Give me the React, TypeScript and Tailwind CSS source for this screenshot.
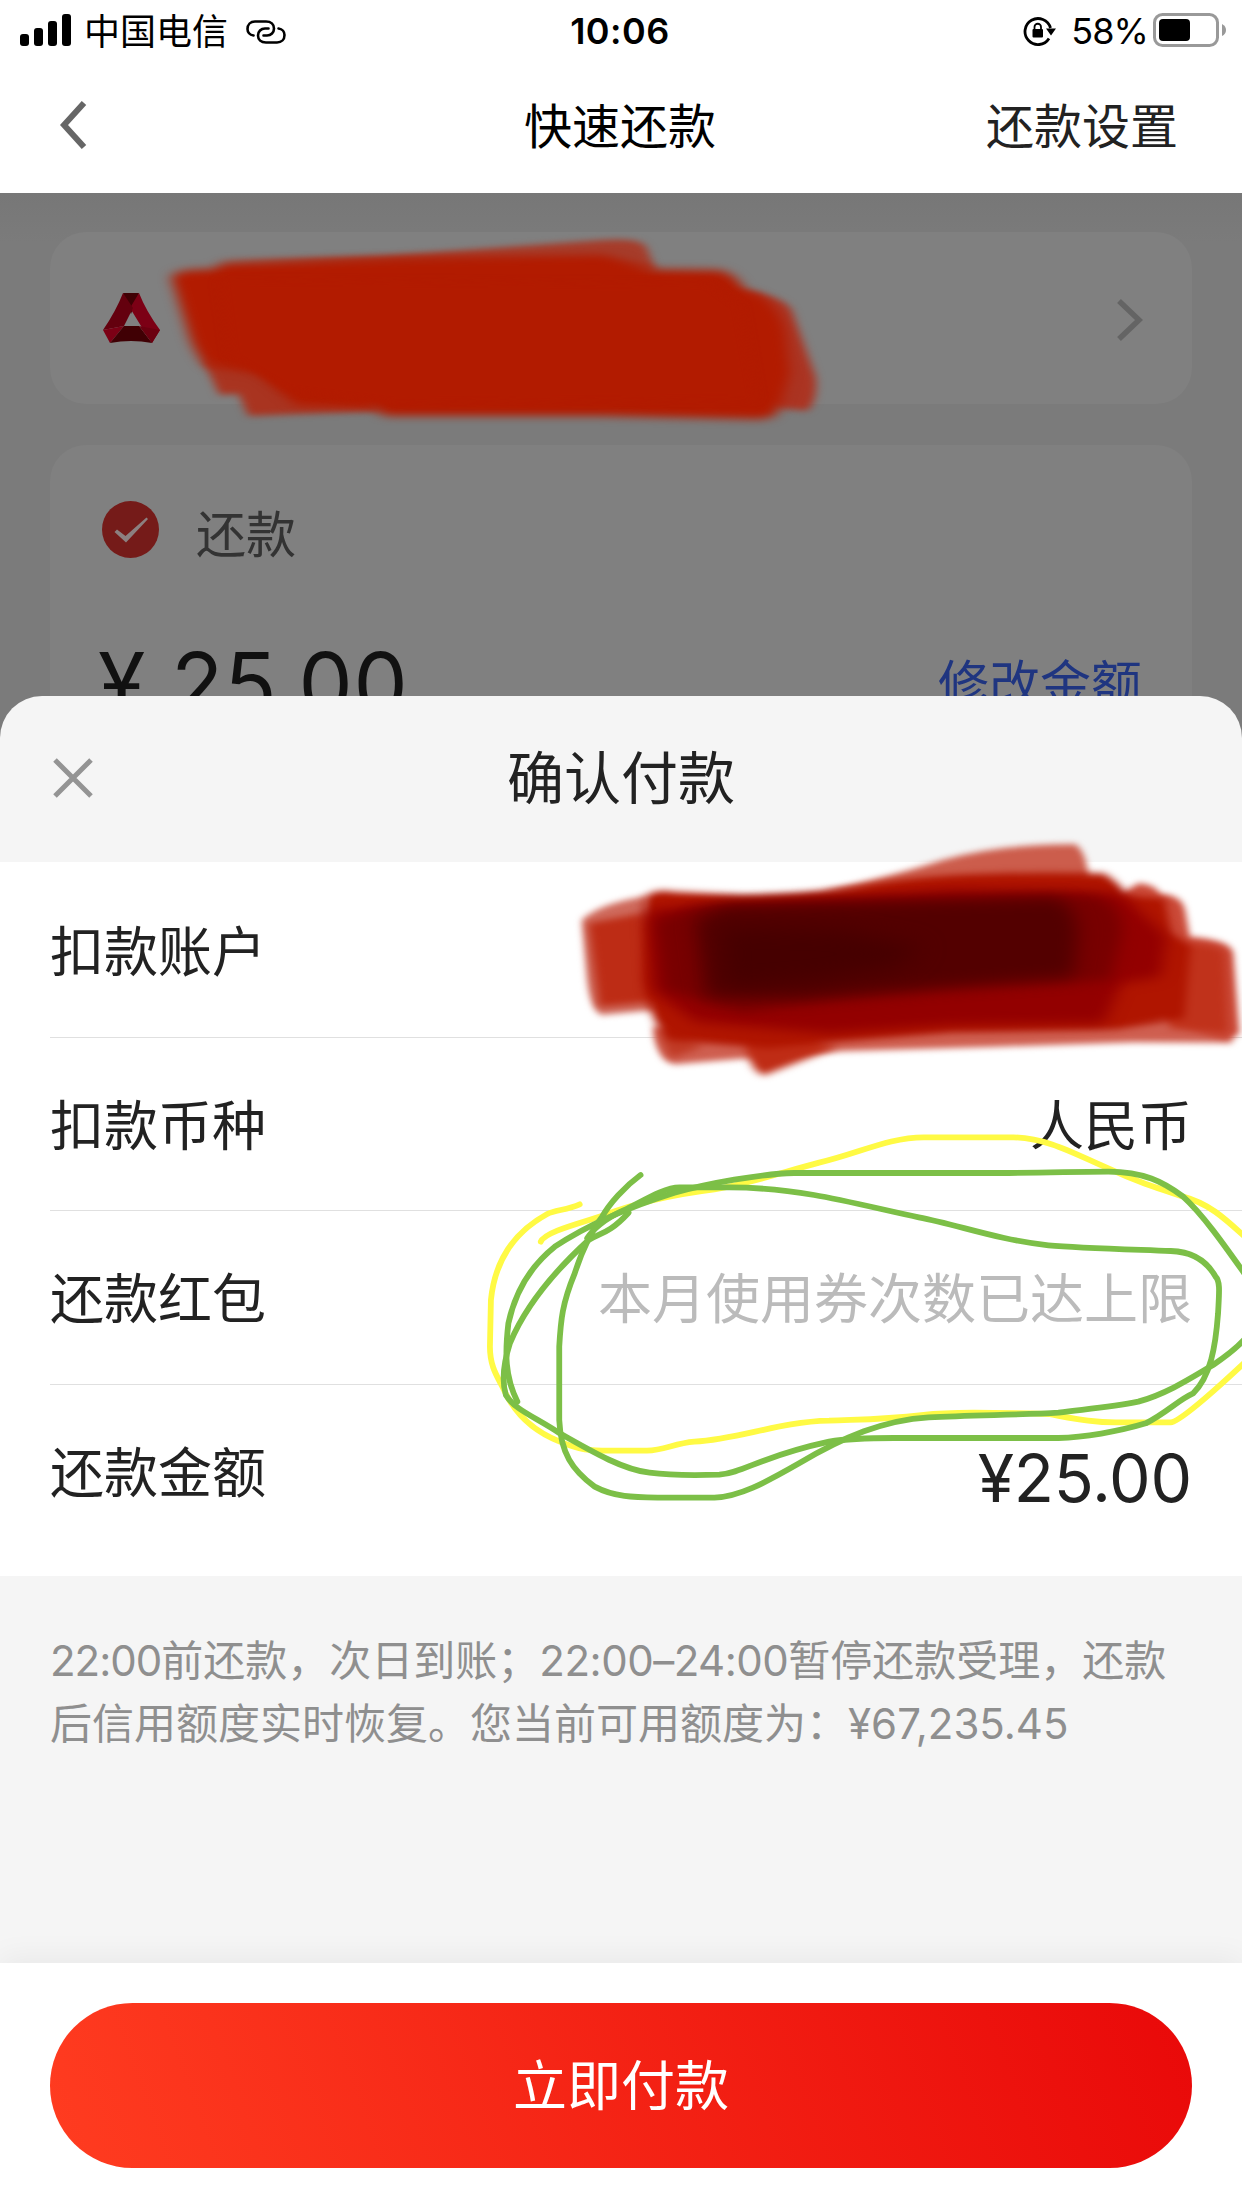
import type { ReactNode } from "react";

const rows: { label: string; value?: string; tone?: string }[] = [
  { label: "扣款账户" },
  { label: "扣款币种", value: "人民币", tone: "text-[#222]" },
  { label: "还款红包", value: "本月使用券次数已达上限", tone: "text-[#bbb]" },
];

function Num({ children, className = "" }: { children: ReactNode; className?: string }) {
  return <span className={`font-['Inter','Liberation_Sans',sans-serif] leading-none ${className}`}>{children}</span>;
}

function StatusBar() {
  return (
    <div className="flex h-[62px] items-center justify-between pr-[15px] pl-5 text-[36px] leading-none text-black">
      <div className="flex w-[473px] items-center">
        <svg width="51" height="32" viewBox="0 0 51 32" className="mr-[13px] -mt-0.5">
          <rect x="0" y="20" width="9" height="12" rx="3" />
          <rect x="14" y="14" width="9" height="18" rx="3" />
          <rect x="28" y="7" width="9" height="25" rx="3" />
          <rect x="42" y="0" width="9" height="32" rx="3" />
        </svg>
        <span className="-mt-1">中国电信</span>
        <svg width="40" height="24" viewBox="0 0 40 24" fill="none" stroke="#000" strokeWidth="2.6" strokeLinecap="round" className="mt-0.5 ml-[18px]">
          <path d="M7.5 15.5C3.5 15 1.5 12 1.5 9C1.500 4.500 4.500 1.500 9 1.500H20C25 1.500 28 4.500 28 8.500C28 12.500 25 15.500 21 15.500H17.500" />
          <path d="M32.500 8.500C36.500 9 38.500 12 38.500 15C38.500 19.500 35.500 22.500 31 22.500H20C15 22.500 12 19.500 12 15.500C12 11.500 15 8.500 19 8.500H22.500" />
        </svg>
      </div>
      <Num className="text-[36px] font-semibold tracking-[0.5px]">10:06</Num>
      <div className="flex w-[480px] items-center justify-end">
        <svg width="34" height="30" viewBox="0 0 34 30" className="mr-[14px]">
          <path d="M26 22.500A13 13 0 1 1 27.500 12" fill="none" stroke="#000" strokeWidth="2.800" />
          <path d="M23 12.500H33L28 19.500Z" />
          <rect x="9.500" y="13" width="10.500" height="8.500" rx="1" />
          <path d="M11.500 14V11A3.200 3.200 0 0 1 18 11V14" fill="none" stroke="#000" strokeWidth="1.800" />
        </svg>
        <Num className="tracking-[-0.9px]">58%</Num>
        <svg width="74" height="34" viewBox="0 0 74 34" className="-mt-0.5 ml-[5px]">
          <rect x="1.500" y="1.500" width="63" height="31" rx="8" fill="none" stroke="#999" strokeWidth="3" />
          <rect x="6" y="6" width="31" height="22" rx="4" />
          <path d="M69 11Q73 13 73 17T69 23Z" fill="#999" />
        </svg>
      </div>
    </div>
  );
}

function NavBar() {
  return (
    <div className="flex h-[131px] items-center justify-between pr-16 pb-[9px] pl-[60px] text-[48px] leading-none">
      <div className="w-[194px]">
        <svg width="27" height="48" viewBox="0 0 27 48" fill="none" stroke="#666" strokeWidth="6" className="mt-1">
          <path d="M24 2L4 24L24 46" />
        </svg>
      </div>
      <h1 className="text-black">快速还款</h1>
      <span className="text-[#222]">还款设置</span>
    </div>
  );
}

function BankLogo() {
  return (
    <svg width="57" height="51" viewBox="0 0 57 51" className="-ml-px">
      <path d="M20 0H36L28 21Z" fill="#400004" />
      <path d="M36 0Q43 18 57 37L49 50L38 33L27 15Z" fill="#7c0015" />
      <path d="M20 0Q13 18 0 37L21 33L30 15Z" fill="#64000e" />
      <path d="M0 37L21 33L7 50Z" fill="#7c0015" />
      <path d="M21 33H36L49 50Q28 46 7 50Z" fill="#400004" />
      <path d="M36 33L57 37L49 50Z" fill="#6c0010" />
    </svg>
  );
}

// marker strokes that hide the card number
function AccountMask() {
  return (
    <svg className="absolute top-[200px] left-0 h-[250px] w-[860px]" viewBox="0 0 1568 750" preserveAspectRatio="none">
      <g className="blur-[9px]">
        <path d="M390 190L700 168L1100 120Q1165 112 1178 140L1197 215L900 200Z" fill="#a63c2a" />
        <path d="M1300 262Q1425 275 1443 330L1487 530Q1492 600 1472 632L1420 625L1340 560Z" fill="#ab3422" />
        <path d="M370 480L400 584L435 582L453 648L700 632L560 480Z" fill="#a93420" />
      </g>
      <g className="blur-[12px]">
        <path d="M312 230Q325 205 385 208L410 188L720 174L1100 165L1195 208L1310 210Q1343 220 1357 270L1385 285Q1425 330 1432 400L1440 520L1417 640Q1405 660 1370 657L1100 648H710Q690 645 685 625L540 615L470 520L375 497Q350 450 340 380Z" fill="#b21b00" />
      </g>
      <path d="M400 240L1290 250L1350 320L1380 600L720 610L520 570L420 470Z" fill="#b21b00" className="blur-[10px]" />
    </svg>
  );
}

function PayerMask() {
  return (
    <svg className="absolute top-[820px] left-[560px] h-[280px] w-[682px]" viewBox="0 0 1568 840" preserveAspectRatio="none">
      <g className="blur-[9px]">
        <path d="M50 300Q90 250 200 228L220 570L95 585Q70 570 62 480Z" fill="#cf6a5c" />
        <path d="M600 215Q760 170 880 120Q1010 72 1185 73Q1210 95 1216 180L1100 230Z" fill="#cc5d4c" />
        <path d="M213 620Q220 725 265 733L430 715L640 694L1000 680L1320 667L1545 668L1555 580L900 600Z" fill="#cf5f50" />
        <path d="M1280 230L1330 190Q1370 195 1380 222Q1430 225 1437 270L1448 350Q1545 360 1548 400L1562 640L1530 668L1400 600Z" fill="#cb4a38" />
      </g>
      <g className="blur-[11px]">
        <path d="M65 310L190 280L215 545L90 560Z" fill="#bd2c15" />
        <path d="M420 640Q435 760 470 765L640 680Z" fill="#bf2c15" />
        <path d="M1430 370Q1520 375 1528 400L1535 640L1400 625Z" fill="#c0321b" />
        <path d="M225 640L255 715L330 680Z" fill="#c03a25" />
        <path d="M195 235Q210 205 260 215L420 225Q600 222 730 190Q900 150 1250 160Q1290 190 1300 228L1390 235L1405 340L1450 375L1435 595L1280 628L900 636L640 664L480 685L250 660Q205 600 190 480Z" fill="#b01500" />
      </g>
      <g className="blur-[18px]">
        <path d="M200 270L700 228L900 210L1290 220L1395 350L1380 470L1290 490L1250 610L900 615L620 640L310 605L210 510Z" fill="#930000" />
      </g>
      <g className="blur-[18px]">
        <path d="M220 300L320 258L1200 225Q1300 230 1290 350L1265 480L900 505L600 540L420 575L240 510Z" fill="#780000" />
      </g>
      <g className="blur-[22px]">
        <path d="M310 300L380 258L1140 235Q1190 260 1190 350L1180 470L900 498L560 535L335 530Z" fill="#530000" />
      </g>
      <path d="M370 320L640 330L830 380L780 440L600 480L380 505Z" fill="#460000" className="blur-[30px]" />
    </svg>
  );
}

// hand-drawn loops round the coupon row
function PenLoops() {
  return (
    <svg
      className="absolute top-[1100px] left-[460px] h-[420px] w-[782px] [&_path]:[vector-effect:non-scaling-stroke]"
      viewBox="0 0 1568 1260"
      preserveAspectRatio="none"
      fill="none"
      strokeWidth="5.8"
      strokeLinecap="round"
    >
      <g stroke="#fffa44">
        <path d="M240 313C215 330 190 330 175 342C110 395 70 480 62 600L60 740C60 800 75 830 85 860C105 930 140 990 200 1025C240 1050 260 1052 300 1052H375C410 1050 430 1030 470 1025C560 1018 640 965 740 962C800 958 840 960 930 945C980 935 1060 937 1180 942C1230 955 1270 968 1320 967H1425C1440 965 1500 890 1575 785" />
        <path d="M1575 412C1530 350 1500 310 1450 290C1380 255 1350 240 1300 205C1230 160 1180 115 1110 112H930C860 112 800 160 720 188C640 220 580 250 510 268C420 285 350 310 290 345C240 370 170 395 162 425" />
      </g>
      <g stroke="#7cbf47">
        <path d="M362 225C330 260 300 310 285 350C260 400 245 450 230 520C205 610 202 660 199 740V960C202 1060 225 1110 270 1160C310 1192 350 1192 400 1193H510C560 1190 610 1150 680 1090C770 1010 850 960 940 952C1030 945 1130 945 1200 938C1270 925 1310 920 1360 905C1420 880 1470 830 1510 795C1540 765 1560 740 1575 715" />
        <path d="M1575 525C1530 430 1490 345 1450 290C1410 245 1370 215 1300 215C1230 215 1200 218 1100 219H670C600 222 500 250 430 278C330 325 250 380 190 440C140 500 110 580 97 670C90 760 90 830 115 905" />
        <path d="M338 338C300 400 280 400 258 420C170 540 125 640 100 730C85 800 85 850 92 885C110 930 150 950 200 1000C270 1060 330 1110 380 1118C430 1128 480 1126 520 1124C570 1118 600 1070 740 1025C780 1015 830 1014 870 1014H1200C1250 1012 1320 995 1375 970C1420 935 1440 900 1470 880C1505 830 1515 740 1520 640C1522 580 1525 545 1515 530C1500 490 1475 455 1425 453C1340 448 1240 444 1180 436C1080 420 1000 375 920 352C850 330 770 300 710 285C650 270 600 262 540 262H440C410 262 370 300 330 330C290 355 265 390 255 415" />
      </g>
    </svg>
  );
}

export default function App() {
  return (
    <div className="relative flex h-[2208px] w-[1242px] flex-col overflow-hidden bg-white font-['Noto_Sans_CJK_SC',sans-serif]">
      <header className="shrink-0 bg-white">
        <StatusBar />
        <NavBar />
      </header>

      <main className="flex h-[503px] shrink-0 flex-col gap-[41px] overflow-hidden bg-[#7b7b7b] bg-linear-to-b from-[#777] to-[#7b7b7b] to-10% px-[50px] pt-[39px]">
        <section className="flex h-[172px] shrink-0 items-center justify-between rounded-[36px] bg-[#808080] pr-[49px] pl-[54px]">
          <BankLogo />
          <svg width="26" height="42" viewBox="0 0 26 42" fill="none" stroke="#646464" strokeWidth="5.500" className="mt-1">
            <path d="M2 2L22 21L2 40" />
          </svg>
        </section>
        <section className="h-[400px] shrink-0 rounded-[36px] bg-[#808080] px-[50px] pt-[54px]">
          <div className="flex h-[64px] items-center">
            <svg width="57" height="57" viewBox="0 0 57 57" className="-mt-1 ml-0.5">
              <circle cx="28.500" cy="28.500" r="28.500" fill="#751b19" />
              <path d="M12.500 31L15 28.500L23.500 35L44.500 16.500L46 18L24 41.500Z" fill="#8c8080" />
            </svg>
            <span className="ml-[37px] text-[50px] leading-none text-[#333]">还款</span>
          </div>
          <div className="mt-[78px] flex items-start justify-between leading-none">
            <Num className="-ml-0.5 text-[86px] tracking-[0.8px] text-[#111]">¥ 25.00</Num>
            <span className="mt-[15px] text-[51px] text-[#1f3580]">修改金额</span>
          </div>
        </section>
      </main>

      <div className="flex grow flex-col bg-[#7b7b7b]">
        <div className="flex h-[166px] shrink-0 items-center justify-between rounded-t-[42px] bg-[#f5f5f5] px-[53px] pb-[10px]">
          <svg width="40" height="40" viewBox="0 0 40 40" fill="none" stroke="#949494" strokeWidth="5" className="mt-2">
            <path d="M2 2L38 38M38 2L2 38" />
          </svg>
          <h2 className="text-[57px] leading-none text-[#222]">确认付款</h2>
          <div className="w-10" />
        </div>

        <div className="h-[714px] shrink-0 bg-white pt-0.5 pl-[50px] text-[54px] leading-none text-[#222]">
          {rows.map((r) => (
            <div key={r.label} className="flex h-[173.500px] items-center justify-between border-b border-[#e0e0e0] pr-[50px] pb-0.5">
              <span>{r.label}</span>
              {r.value && <span className={r.tone}>{r.value}</span>}
            </div>
          ))}
          <div className="flex h-[173px] items-center justify-between pr-[50px] pb-0.5">
            <span>还款金额</span>
            <Num className="mt-4 text-[66px] tracking-[-0.200px]">¥25.00</Num>
          </div>
        </div>

        <div className="h-[387px] shrink-0 bg-[#f5f5f5] pt-[50px] pl-[50px] text-[42px] leading-[63px] whitespace-nowrap text-[#8f8f8f]">
          <p className="h-[63px]">
            <Num className="tracking-[-1px]">22:00</Num>前还款，次日到账；<Num className="tracking-[-0.5px]">22:00–24:00</Num>暂停还款受理，还款
          </p>
          <p className="h-[63px]">
            后信用额度实时恢复。您当前可用额度为：<Num>¥67,235.45</Num>
          </p>
        </div>

        <footer className="grow bg-white px-[50px] pt-10 shadow-[0_-4px_30px_rgba(0,0,0,0.06)]">
          <button className="flex h-[165px] w-full items-center justify-center rounded-full bg-linear-[70deg,#ff3c20,#e90909] pb-1.5 text-[54px] leading-none text-white">
            立即付款
          </button>
        </footer>
      </div>

      <AccountMask />
      <PayerMask />
      <PenLoops />
    </div>
  );
}
